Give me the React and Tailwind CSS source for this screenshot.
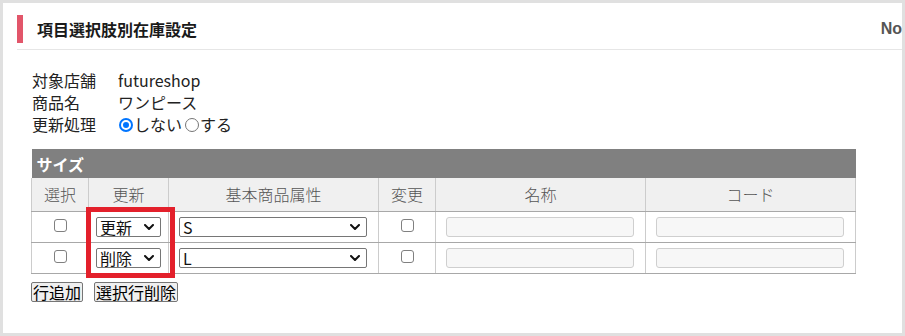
import React from "react";

const jp = "font-['Noto_Sans_CJK_JP','Noto_Sans',sans-serif]";

function Chevron() {
  return (
    <svg width="10" height="6" viewBox="0 0 10 6" className="shrink-0">
      <path d="M1 1 L5 5 L9 1" fill="none" stroke="#111" strokeWidth="2" strokeLinecap="round" strokeLinejoin="round" />
    </svg>
  );
}

function Select({ value, w }) {
  return (
    <div className={`${w} h-[20px] flex items-center justify-between border border-[#767676] rounded-[2px] bg-white pl-[3px] pr-[6px] text-[16px] leading-[18px] text-[#111]`}>
      <span>{value}</span>
      <Chevron />
    </div>
  );
}

function Checkbox() {
  return <div className="w-[13px] h-[13px] border border-[#808080] rounded-[3px] bg-white mx-auto" />;
}

function TextBox() {
  return <div className="w-[188px] h-[20px] border border-[#cfcfcf] rounded-[3px] bg-[#f7f7f7]" />;
}

const th = "border-l border-r border-[#cccccc] border-b border-b-[#a8a8a8] font-light text-[#555] text-[16px] leading-[20px] text-center bg-[#f0f0f0] h-[33px] p-0";
const td = "border-l border-r border-[#cccccc] border-b border-b-[#a8a8a8] h-[31px] p-0 align-middle";

function Row({ op }) {
  return (
    <tr>
      <td className={td}><div className="flex justify-center pb-[2px]"><Checkbox /></div></td>
      <td className={td}><div className="pl-[7px]"><Select value={op} w="w-[65px]" /></div></td>
      <td className={td}><div className="pl-[10px]"><Select value={op === "更新" ? "S" : "L"} w="w-[188px]" /></div></td>
      <td className={td}><div className="flex justify-center pb-[2px]"><Checkbox /></div></td>
      <td className={td}><div className="pl-[10px]"><TextBox /></div></td>
      <td className={td}><div className="pl-[10px]"><TextBox /></div></td>
    </tr>
  );
}

export default function App() {
  return (
    <div className={`w-[905px] h-[336px] border-[3px] border-[#e0e0e0] bg-white overflow-hidden ${jp} text-[#222]`}>
      <div className="ml-[14px]">
        <div className="flex items-center justify-between pt-[12px] pb-[6px] border-b border-[#e6e6e6]">
          <div className="flex items-center">
            <div className="w-[6px] h-[28px] bg-[#e2566a]" />
            <div className="ml-[14px] text-[16px] leading-[22px] font-bold text-[#1a1a1a]">項目選択肢別在庫設定</div>
          </div>
          <div className="text-[16px] leading-[22px] font-bold text-[#555] font-['Liberation_Sans',sans-serif]">No</div>
        </div>

        <div className="pl-[14px]">
          <div className="mt-[19px] ml-[1px] text-[16px] leading-[22px] text-[#222]">
            <div className="flex"><div className="w-[86px]">対象店舗</div><div>futureshop</div></div>
            <div className="flex"><div className="w-[86px]">商品名</div><div>ワンピース</div></div>
            <div className="flex items-center">
              <div className="w-[86px]">更新処理</div>
              <div className="flex items-center">
                <span className="ml-[1px] mt-[1px] w-[14px] h-[14px] rounded-full bg-[#0075ff] flex items-center justify-center">
                  <span className="w-[10px] h-[10px] rounded-full border-[2px] border-white bg-[#0075ff]" />
                </span>
                <span className="ml-[1px]">しない</span>
                <span className="ml-[3px] mt-[1px] w-[14px] h-[14px] rounded-full border border-[#767676] bg-white" />
                <span className="ml-[1px]">する</span>
              </div>
            </div>
          </div>

          <div className="relative mt-[14px] w-[824px]">
            <table className="border-collapse table-fixed w-[824px]">
              <colgroup>
                <col className="w-[57px]" />
                <col className="w-[80px]" />
                <col className="w-[210px]" />
                <col className="w-[57px]" />
                <col className="w-[210px]" />
                <col className="w-[210px]" />
              </colgroup>
              <thead>
                <tr>
                  <th colSpan={6} className="bg-[#808080] h-[29px] p-0 pl-[5px] text-left text-white font-bold text-[16px] leading-[20px]">サイズ</th>
                </tr>
                <tr>
                  <th className={th}>選択</th>
                  <th className={th}>更新</th>
                  <th className={th}>基本商品属性</th>
                  <th className={th}>変更</th>
                  <th className={th}>名称</th>
                  <th className={th}>コード</th>
                </tr>
              </thead>
              <tbody>
                <Row op="更新" />
                <Row op="削除" />
              </tbody>
            </table>
            <div className="absolute left-[55px] top-[58px] w-[89px] h-[71px] border-[5px] border-[#e3202b]" />
          </div>

          <div className="mt-[8px] flex items-center text-[16px] leading-[18px] text-black">
            <button className="h-[20px] px-[1px] border border-[#767676] rounded-[2px] bg-[#efefef]">行追加</button>
            <button className="ml-[11px] h-[20px] px-[1px] border border-[#767676] rounded-[2px] bg-[#efefef]">選択行削除</button>
          </div>
        </div>
      </div>
    </div>
  );
}
